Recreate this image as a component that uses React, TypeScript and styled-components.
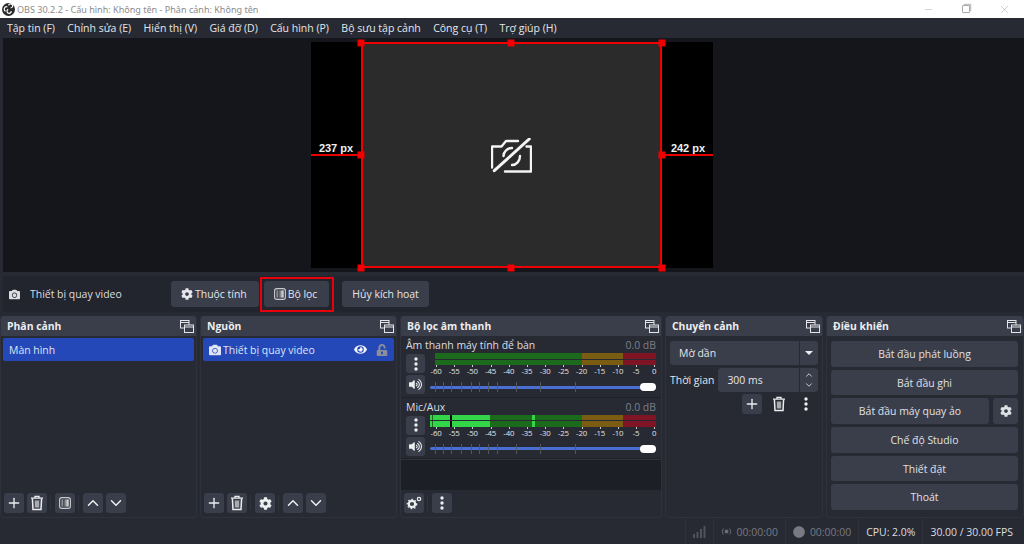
import { ReactNode } from "react";
import styled, { createGlobalStyle } from "styled-components";
import {
  FaCamera,
  FaCog,
  FaEye,
  FaVolumeUp,
  FaUnlockAlt,
  FaCircle,
} from "react-icons/fa";
import { Plus, ChevronUp, ChevronDown, Minus, X } from "lucide-react";

const menus = [
  "Tập tin (F)",
  "Chỉnh sửa (E)",
  "Hiển thị (V)",
  "Giá đỡ (D)",
  "Cấu hình (P)",
  "Bộ sưu tập cảnh",
  "Công cụ (T)",
  "Trợ giúp (H)",
];

const scale = ["-60", "-55", "-50", "-45", "-40", "-35", "-30", "-25", "-20", "-15", "-10", "-5", "0"];
const sliderTicks = [5, 13, 21, 31, 41, 49, 58, 67, 86, 110, 145];

type Peak = { left: number; width: number; color?: string };

const micPeaks: Peak[] = [
  { left: 0, width: 2 },
  { left: 3, width: 17 },
  { left: 20, width: 2, color: "#000" },
  { left: 22, width: 38 },
  { left: 102, width: 3 },
];

const GlobalStyle = createGlobalStyle`
  html, body {
    margin: 0;
    padding: 0;
    background: #272a33;
  }
  * {
    box-sizing: border-box;
  }
`;

const ObsLogo = () => (
  <svg width="13" height="13" viewBox="0 0 13 13" fill="none" stroke="#fff" strokeWidth="1.2">
    <circle cx="6.5" cy="6.5" r="6.5" fill="#2a2a2a" stroke="none" />
    <path d="M6.5 2.4A2.1 2.1 0 1 1 8.6 5" />
    <path d="M9.2 8A2.1 2.1 0 1 1 6.2 6.4" />
    <path d="M3.6 8.2A2.1 2.1 0 1 1 5.4 4" />
  </svg>
);

const DockIcon = () => (
  <svg width="14" height="13" viewBox="0 0 14 13" fill="none" stroke="#e4e5e8" strokeWidth="1">
    <rect x="0.5" y="0.5" width="8.5" height="7.5" fill="#3a3d4a" />
    <path d="M0.5 2.5H9" />
    <rect x="4.5" y="5" width="9" height="7.5" fill="#3a3d4a" />
    <path d="M4.5 7H13.5" />
  </svg>
);

const TrashIcon = () => (
  <svg width="14" height="16" viewBox="0 0 14 16" fill="none">
    <path d="M1 3.2H13M5 3V1.4H9V3" stroke="#eceef0" strokeWidth="1.3" />
    <path d="M2.4 3.5L3 14.6H11L11.6 3.5" stroke="#eceef0" strokeWidth="1.5" />
    <rect x="4.8" y="5.5" width="4.4" height="7" fill="#a9abb0" />
  </svg>
);

const FilterIcon = () => (
  <svg width="12" height="12" viewBox="0 0 12 12">
    <defs>
      <linearGradient id="filterFill" x1="0" x2="1" y1="0" y2="0">
        <stop offset="0" stopColor="#44464f" />
        <stop offset="1" stopColor="#f2f2f2" />
      </linearGradient>
    </defs>
    <rect x="0.6" y="0.6" width="10.8" height="10.8" rx="2.2" fill="none" stroke="#c9cace" strokeWidth="1.1" />
    <rect x="2.4" y="2.4" width="2" height="7.2" fill="#8b8d94" />
    <rect x="4.4" y="2.4" width="5.2" height="7.2" fill="url(#filterFill)" />
  </svg>
);

const DotsIcon = () => (
  <svg width="4" height="14" viewBox="0 0 4 14" fill="#eceef0">
    <circle cx="2" cy="2" r="1.7" />
    <circle cx="2" cy="7" r="1.7" />
    <circle cx="2" cy="12" r="1.7" />
  </svg>
);

const CogsIcon = () => (
  <svg width="16" height="14" viewBox="0 0 16 14" fill="none" stroke="#eceef0">
    <circle cx="6" cy="8" r="3.2" strokeWidth="2.2" />
    <circle cx="6" cy="8" r="4.7" strokeWidth="1.2" strokeDasharray="1.6 1.9" />
    <circle cx="13" cy="3" r="1.7" strokeWidth="1.2" />
  </svg>
);

const NoCameraIcon = () => (
  <svg width="41" height="35" viewBox="0 0 41 35" fill="none" stroke="#f4f4f4" strokeWidth="2.4" strokeLinecap="round" strokeLinejoin="round">
    <path d="M1 29.5V8.5H10.5L15 3H27" />
    <path d="M35.5 8.5H40V33.5H14" />
    <path d="M3.3 32.7L38.3 1" strokeWidth="3" />
    <path d="M12.5 18C12.5 13.5 16.5 10 21 10" />
    <path d="M29 18C29 23 25.5 27 21 27" />
  </svg>
);

const SignalIcon = () => (
  <svg width="13" height="12" viewBox="0 0 13 12" fill="#50535c">
    <rect x="0" y="8" width="2" height="4" />
    <rect x="3.5" y="6" width="2" height="6" />
    <rect x="7" y="3" width="2" height="9" />
    <rect x="10.5" y="0" width="2" height="12" />
  </svg>
);

const BroadcastIcon = () => (
  <svg width="11" height="9" viewBox="0 0 11 9" fill="none" stroke="#6a6d75">
    <circle cx="5.5" cy="4.5" r="2" fill="#6a6d75" stroke="none" />
    <path d="M2.6 1.5C1 3 1 6 2.6 7.5M8.4 1.5C10 3 10 6 8.4 7.5" />
  </svg>
);

const Page = styled.div`
  width: 1024px;
  height: 544px;
  overflow: hidden;
  display: flex;
  flex-direction: column;
  background: #272a33;
  color: #e6e7ea;
  font-family: "Open Sans", "Noto Sans", sans-serif;
  font-size: 10.45px;
`;

const TitleBar = styled.div`
  height: 18px;
  flex: none;
  background: #fff;
  display: flex;
  align-items: center;
  padding-left: 2px;
  color: #8b8b8b;
  font-size: 9.05px;
  font-family: "Noto Sans", "Open Sans", sans-serif;
`;

const TitleLogo = styled.span`
  display: flex;
  margin-right: 2px;
  flex: none;
`;

const TitleText = styled.span`
  flex: 1;
`;

const WindowButtons = styled.div`
  display: flex;
  align-items: center;
  color: #a2a2a2;
  margin-right: 13px;
  gap: 28px;
`;

const RestoreIcon = styled.span`
  width: 8px;
  height: 8px;
  border: 1px solid #a9a9a9;
  border-radius: 1px;
  box-shadow: 1.5px -1.5px 0 -0.2px #c4c4c4;
`;

const MenuBar = styled.div`
  height: 20px;
  flex: none;
  display: flex;
  align-items: center;
  gap: 12.4px;
  padding-left: 7px;
  background: #272a33;
  font-size: 10.5px;
`;

const Preview = styled.div`
  height: 234px;
  flex: none;
  background: #14161c;
  margin-left: 3px;
  display: flex;
  align-items: center;
  justify-content: center;
`;

const Canvas = styled.div`
  position: relative;
  width: 402px;
  height: 226px;
  margin-left: -3px;
  background: #000;
`;

const SourceBox = styled.div`
  position: absolute;
  left: 50px;
  top: 0;
  width: 301px;
  height: 226px;
  background: #2b2b2b;
  border: 2px solid #f00000;
  display: flex;
  align-items: center;
  justify-content: center;
`;

const Handle = styled.span<{ $x: number; $y: number }>`
  position: absolute;
  width: 7px;
  height: 7px;
  background: #f00000;
  left: ${(p) => p.$x}px;
  top: ${(p) => p.$y}px;
  transform: translate(-50%, -50%);
`;

const Guide = styled.span<{ $side: "left" | "right" }>`
  position: absolute;
  top: 112px;
  height: 2px;
  width: 50px;
  background: #e80000;
  ${(p) => p.$side}: 0;
`;

const GuideLabel = styled.span<{ $side: "left" | "right" }>`
  position: absolute;
  top: 100px;
  width: 50px;
  text-align: center;
  color: #f0f0f0;
  font-family: "Liberation Sans", sans-serif;
  font-weight: 700;
  font-size: 11px;
  ${(p) => p.$side}: 0;
`;

const ContextBar = styled.div`
  height: 36px;
  flex: none;
  margin: 4px 0 4px 3px;
  display: flex;
  align-items: center;
  background: #22252d;
  padding-left: 6px;
`;

const ContextSource = styled.div`
  width: 162px;
  display: flex;
  align-items: center;
  gap: 10px;
  color: #dcdde0;
`;

const ContextButtons = styled.div`
  display: flex;
  gap: 5px;
`;

const Button = styled.button`
  height: 26px;
  padding: 0 12px 0 10px;
  border: 0;
  border-radius: 3px;
  background: #3a3d4a;
  color: #e6e7ea;
  font: inherit;
  display: flex;
  align-items: center;
  justify-content: center;
  gap: 2px;
`;

const TextButton = styled(Button)`
  padding: 0 10px;
`;

const FilterWrap = styled.div`
  position: relative;
  margin-right: 8px;
`;

const Highlight = styled.span`
  position: absolute;
  left: -4px;
  right: -5px;
  top: -4px;
  bottom: -5px;
  border: 2px solid #e8000b;
`;

const Docks = styled.div`
  height: 202px;
  flex: none;
  display: flex;
  gap: 3px;
`;

const Dock = styled.section<{ $width: number }>`
  width: ${(p) => p.$width}px;
  flex: none;
  display: flex;
  flex-direction: column;
  border-radius: 3px 3px 4px 4px;
  background: #272a33;
  border: 1px solid #2f323c;
  border-top: 0;
`;

const DockHeader = styled.header`
  height: 20px;
  flex: none;
  display: flex;
  align-items: center;
  justify-content: space-between;
  background: #3a3d4a;
  border-radius: 3px 3px 0 0;
  padding: 0 2px 0 6px;
  font-weight: 700;
  font-size: 10.4px;
  color: #eceef0;
`;

const ListBody = styled.div`
  flex: 1;
  padding: 2px;
`;

const ListRow = styled.div`
  height: 23px;
  border-radius: 2px;
  background: #2548b8;
  color: #dfe5f5;
  display: flex;
  align-items: center;
  padding: 0 6px;
  gap: 2px;
`;

const RowLabel = styled.span`
  flex: 1;
`;

const RowIcons = styled.span`
  display: flex;
  align-items: center;
  gap: 9px;
`;

const Toolbar = styled.div`
  height: 26px;
  flex: none;
  display: flex;
  align-items: center;
  padding: 0 3px 2px;
  gap: 3px;
`;

const ToolButton = styled.span<{ $flat?: boolean }>`
  width: 20px;
  height: 20px;
  border-radius: 3px;
  background: ${(p) => (p.$flat ? "transparent" : "#3a3d4a")};
  display: flex;
  align-items: center;
  justify-content: center;
  color: #eceef0;
  flex: none;
`;

const ToolSeparator = styled.span`
  width: 1px;
  height: 16px;
  margin-right: 1px;
  background: #31343d;
`;

const MixerBody = styled.div`
  flex: none;
  background: #272a33;
`;

const MixerFill = styled.div`
  flex: 1;
  background: #1d1f26;
  border-top: 1px solid #31343d;
  margin-bottom: 1px;
`;

const Channel = styled.div`
  height: 61.5px;
  padding: 2px 5px 0;
  border-bottom: 1px solid #1f2129;
`;

const ChannelHead = styled.div`
  height: 16px;
  padding-bottom: 2px;
  display: flex;
  justify-content: space-between;
  align-items: center;
  color: #dcdde0;
`;

const ChannelDb = styled.span`
  color: #7d7f86;
`;

const ChannelGrid = styled.div`
  display: grid;
  grid-template-columns: 19px minmax(0, 1fr);
  grid-template-rows: 19px 19px;
  column-gap: 5px;
  row-gap: 2px;
`;

const SquareButton = styled.span`
  border-radius: 3px;
  background: #3a3d4a;
  display: flex;
  align-items: center;
  justify-content: center;
  color: #eceef0;
`;

const MeterCell = styled.div`
  display: flex;
  flex-direction: column;
  min-width: 0;
`;

const MeterBars = styled.div<{ $inset: number }>`
  display: flex;
  flex-direction: column;
  gap: 1px;
  margin: -1px 0 0 ${(p) => p.$inset}px;
`;

const MeterBar = styled.div`
  height: 5.5px;
  position: relative;
  background: linear-gradient(
    to left,
    #7e1424 0 33px,
    #7a5c12 33px 74px,
    #1c6a1c 74px 100%
  );
`;

const MeterPeak = styled.span<{ $left: number; $width: number; $color?: string }>`
  position: absolute;
  top: 0;
  height: 100%;
  left: ${(p) => p.$left}px;
  width: ${(p) => p.$width}px;
  background: ${(p) => p.$color ?? "#33d648"};
`;

const ScaleRow = styled.div`
  display: flex;
  margin-left: -3.1px;
  font-size: 7.8px;
  line-height: 9px;
  color: #e2e3e6;
  letter-spacing: -0.2px;
`;

const ScaleCell = styled.span`
  position: relative;
  width: 18.2px;
  flex: none;
  padding-top: 2px;
  text-align: center;
  &::before {
    content: "";
    position: absolute;
    top: 0;
    left: 50%;
    width: 1px;
    height: 2px;
    background: #c8c9cc;
  }
`;

const SliderCell = styled.div`
  position: relative;
  display: flex;
  align-items: center;
`;

const SliderTrack = styled.div`
  flex: 1;
  height: 3px;
  margin-top: 5px;
  border-radius: 2px;
  background: #4a6fd2;
`;

const SliderTick = styled.span<{ $left: number }>`
  position: absolute;
  top: 7px;
  left: ${(p) => p.$left}px;
  width: 1px;
  height: 10px;
  background: #52555e;
`;

const SliderThumb = styled.span`
  position: absolute;
  right: 0;
  top: 8px;
  width: 16px;
  height: 8px;
  border-radius: 4px;
  background: #fff;
`;

const TransitionBody = styled.div`
  flex: 1;
  padding: 5px 4px 0;
  display: flex;
  flex-direction: column;
  gap: 3px;
`;

const Combo = styled.div`
  height: 24px;
  border-radius: 3px;
  background: #3a3d4a;
  display: flex;
  align-items: center;
  padding-left: 9px;
`;

const ComboText = styled.span`
  flex: 1;
`;

const ComboArrow = styled.span`
  width: 19px;
  height: 100%;
  border-left: 1px solid #272a33;
  display: flex;
  align-items: center;
  justify-content: center;
  &::after {
    content: "";
    border-left: 4px solid transparent;
    border-right: 4px solid transparent;
    border-top: 4px solid #eceef0;
  }
`;

const DurationRow = styled.div`
  display: flex;
  align-items: center;
  gap: 4px;
  height: 24px;
`;

const Spin = styled.div`
  flex: 1;
  height: 24px;
  border-radius: 3px;
  background: #3a3d4a;
  display: flex;
  align-items: center;
  padding-left: 9px;
`;

const SpinArrows = styled.span`
  width: 19px;
  height: 100%;
  border-left: 1px solid #272a33;
  display: flex;
  flex-direction: column;
  align-items: center;
  justify-content: center;
`;

const TransitionTools = styled.div`
  display: flex;
  justify-content: flex-end;
  gap: 7px;
  margin: -1px 2px 0 0;
`;

const ControlBody = styled.div`
  flex: 1;
  padding: 5px 5px 0 4px;
  display: flex;
  flex-direction: column;
  gap: 3px;
`;

const ControlButton = styled.button`
  flex: 1;
  height: 100%;
  border: 0;
  border-radius: 3px;
  background: #3a3d4a;
  color: #e0e1e4;
  font: inherit;
  display: flex;
  align-items: center;
  justify-content: center;
`;

const ControlRow = styled.div`
  display: flex;
  gap: 4px;
  height: 25.7px;
  flex: none;
`;

const ControlSquare = styled(ControlButton)`
  width: 25px;
  flex: none;
`;

const StatusBar = styled.footer`
  flex: 1;
  display: flex;
  justify-content: flex-end;
  align-items: stretch;
  margin-top: 1px;
  padding-right: 4px;
`;

const StatusItem = styled.div<{ $dim?: boolean }>`
  display: flex;
  align-items: center;
  gap: 5px;
  padding: 0 7px;
  border-left: 1px solid #2f323c;
  color: ${(p) => (p.$dim ? "#777a82" : "#dcdde0")};
`;

const Panel = ({
  title,
  width,
  children,
}: {
  title: string;
  width: number;
  children: ReactNode;
}) => (
  <Dock $width={width}>
    <DockHeader>
      {title}
      <DockIcon />
    </DockHeader>
    {children}
  </Dock>
);

const Meter = ({ name, inset, peaks = [] }: { name: string; inset: number; peaks?: Peak[] }) => (
  <Channel>
    <ChannelHead>
      {name}
      <ChannelDb>0.0 dB</ChannelDb>
    </ChannelHead>
    <ChannelGrid>
      <SquareButton>
        <DotsIcon />
      </SquareButton>
      <MeterCell>
        <MeterBars $inset={inset}>
          {[0, 1].map((bar) => (
            <MeterBar key={bar}>
              {peaks.map((p) => (
                <MeterPeak key={p.left} $left={p.left} $width={p.width} $color={p.color} />
              ))}
            </MeterBar>
          ))}
        </MeterBars>
        <ScaleRow>
          {scale.map((s) => (
            <ScaleCell key={s}>{s}</ScaleCell>
          ))}
        </ScaleRow>
      </MeterCell>
      <SquareButton>
        <FaVolumeUp size={13} />
      </SquareButton>
      <SliderCell>
        {sliderTicks.map((t) => (
          <SliderTick key={t} $left={t} />
        ))}
        <SliderTrack />
        <SliderThumb />
      </SliderCell>
    </ChannelGrid>
  </Channel>
);

const ListTools = ({ middle }: { middle: ReactNode }) => (
  <Toolbar>
    <ToolButton>
      <Plus size={16} strokeWidth={2} />
    </ToolButton>
    <ToolButton>
      <TrashIcon />
    </ToolButton>
    <ToolSeparator />
    <ToolButton>{middle}</ToolButton>
    <ToolSeparator />
    <ToolButton>
      <ChevronUp size={18} strokeWidth={2} />
    </ToolButton>
    <ToolButton>
      <ChevronDown size={18} strokeWidth={2} />
    </ToolButton>
  </Toolbar>
);

export default function App() {
  const handles: [number, number][] = [
    [50, 0.5],
    [200, 0.5],
    [351, 0.5],
    [50, 113],
    [351, 113],
    [50, 226],
    [200, 226],
    [351, 226],
  ];

  return (
    <Page>
      <GlobalStyle />
      <TitleBar>
        <TitleLogo>
          <ObsLogo />
        </TitleLogo>
        <TitleText>OBS 30.2.2 - Cấu hình: Không tên - Phân cảnh: Không tên</TitleText>
        <WindowButtons>
          <Minus size={11} strokeWidth={1} />
          <RestoreIcon />
          <X size={13} strokeWidth={1} />
        </WindowButtons>
      </TitleBar>
      <MenuBar>
        {menus.map((m) => (
          <span key={m}>{m}</span>
        ))}
      </MenuBar>
      <Preview>
        <Canvas>
          <SourceBox>
            <NoCameraIcon />
          </SourceBox>
          <Guide $side="left" />
          <Guide $side="right" />
          <GuideLabel $side="left">237 px</GuideLabel>
          <GuideLabel $side="right">242 px</GuideLabel>
          {handles.map(([x, y]) => (
            <Handle key={`${x}-${y}`} $x={x} $y={y} />
          ))}
        </Canvas>
      </Preview>
      <ContextBar>
        <ContextSource>
          <FaCamera size={11} />
          Thiết bị quay video
        </ContextSource>
        <ContextButtons>
          <Button>
            <FaCog size={12} />
            Thuộc tính
          </Button>
          <FilterWrap>
            <Button>
              <FilterIcon />
              Bộ lọc
            </Button>
            <Highlight />
          </FilterWrap>
          <TextButton>Hủy kích hoạt</TextButton>
        </ContextButtons>
      </ContextBar>
      <Docks>
        <Panel title="Phân cảnh" width={197}>
          <ListBody>
            <ListRow>Màn hình</ListRow>
          </ListBody>
          <ListTools middle={<FilterIcon />} />
        </Panel>
        <Panel title="Nguồn" width={197}>
          <ListBody>
            <ListRow>
              <FaCamera size={12} />
              <RowLabel>Thiết bị quay video</RowLabel>
              <RowIcons>
                <FaEye size={13} color="#f0f2f8" />
                <FaUnlockAlt size={12} color="#8d8f98" />
              </RowIcons>
            </ListRow>
          </ListBody>
          <ListTools middle={<FaCog size={13} />} />
        </Panel>
        <Panel title="Bộ lọc âm thanh" width={262}>
          <MixerBody>
            <Meter name="Âm thanh máy tính để bàn" inset={4.5} />
            <Meter name="Mic/Aux" inset={0} peaks={micPeaks} />
          </MixerBody>
          <MixerFill />
          <Toolbar>
            <ToolButton>
              <CogsIcon />
            </ToolButton>
            <ToolSeparator />
            <ToolButton>
              <DotsIcon />
            </ToolButton>
          </Toolbar>
        </Panel>
        <Panel title="Chuyển cảnh" width={158}>
          <TransitionBody>
            <Combo>
              <ComboText>Mờ dần</ComboText>
              <ComboArrow />
            </Combo>
            <DurationRow>
              Thời gian
              <Spin>
                <ComboText>300 ms</ComboText>
                <SpinArrows>
                  <ChevronUp size={10} strokeWidth={2} />
                  <ChevronDown size={10} strokeWidth={2} />
                </SpinArrows>
              </Spin>
            </DurationRow>
            <TransitionTools>
              <ToolButton>
                <Plus size={16} strokeWidth={2} />
              </ToolButton>
              <ToolButton $flat>
                <TrashIcon />
              </ToolButton>
              <ToolButton $flat>
                <DotsIcon />
              </ToolButton>
            </TransitionTools>
          </TransitionBody>
        </Panel>
        <Panel title="Điều khiển" width={198}>
          <ControlBody>
            <ControlRow>
              <ControlButton>Bắt đầu phát luồng</ControlButton>
            </ControlRow>
            <ControlRow>
              <ControlButton>Bắt đầu ghi</ControlButton>
            </ControlRow>
            <ControlRow>
              <ControlButton>Bắt đầu máy quay ảo</ControlButton>
              <ControlSquare>
                <FaCog size={12} />
              </ControlSquare>
            </ControlRow>
            <ControlRow>
              <ControlButton>Chế độ Studio</ControlButton>
            </ControlRow>
            <ControlRow>
              <ControlButton>Thiết đặt</ControlButton>
            </ControlRow>
            <ControlRow>
              <ControlButton>Thoát</ControlButton>
            </ControlRow>
          </ControlBody>
        </Panel>
      </Docks>
      <StatusBar>
        <StatusItem>
          <SignalIcon />
        </StatusItem>
        <StatusItem $dim>
          <BroadcastIcon />
          00:00:00
        </StatusItem>
        <StatusItem $dim>
          <FaCircle size={12} />
          00:00:00
        </StatusItem>
        <StatusItem>CPU: 2.0%</StatusItem>
        <StatusItem>30.00 / 30.00 FPS</StatusItem>
      </StatusBar>
    </Page>
  );
}
